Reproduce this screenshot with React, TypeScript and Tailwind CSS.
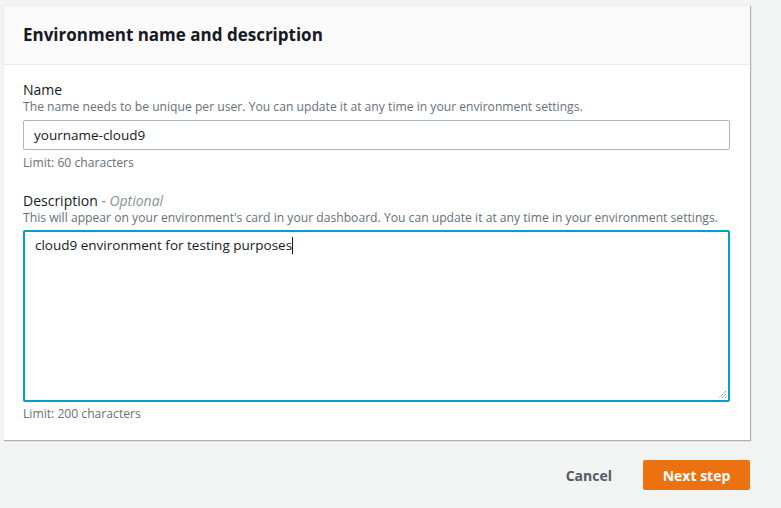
import React from "react";

export default function App() {
  return (
    <div
      className="min-h-[508px] w-full bg-[#f2f3f3] pt-[5px] pl-[3px] pr-[31px]"
      style={{ fontFamily: '"Open Sans", "Noto Sans", sans-serif' }}
    >
      <div className="w-[747px] bg-white border-l border-t border-[#eaeded] shadow-[1px_1px_1px_0_rgba(0,28,36,0.3)]">
        <div className="h-[59px] bg-[#fafafa] border-b border-[#eaeded] flex items-center px-[19px]">
          <h2 className="text-[17px] font-bold text-[#16191f] leading-[22px]">
            Environment name and description
          </h2>
        </div>
        <div className="px-[19px] pt-[16px] pb-[18px]">
          <div className="text-[14px] leading-[18px] text-[#16191f]">Name</div>
          <div className="text-[12.15px] leading-[16px] text-[#687078]">
            The name needs to be unique per user. You can update it at any time in your environment settings.
          </div>
          <div className="mt-[5px] w-[707px] h-[30px] border border-[#aab7b8] rounded-[2px] pl-[10px] flex items-center text-[13.5px] text-[#16191f] bg-white">
            yourname-cloud9
          </div>
          <div className="mt-[5px] text-[12.15px] leading-[16px] text-[#687078]">Limit: 60 characters</div>

          <div className="mt-[21px] text-[14px] leading-[18px] text-[#16191f]">
            Description <span className="italic text-[#879596]">- Optional</span>
          </div>
          <div className="text-[12.15px] leading-[16px] text-[#687078]">
            This will appear on your environment's card in your dashboard. You can update it at any time in your environment settings.
          </div>
          <div className="relative mt-[4px] w-[707px] h-[172px] border-2 border-[#00a1c9] rounded-[2px] pl-[10px] pt-[3px] bg-white">
            <div className="text-[13.5px] leading-[20px] text-[#16191f] flex items-center">
              <span>cloud9 environment for testing purposes</span>
              <span className="inline-block w-px h-[17px] bg-[#16191f]" />
            </div>
            <svg
              className="absolute right-[1px] bottom-[1px]"
              width="9"
              height="9"
              viewBox="0 0 9 9"
            >
              <path d="M8 1 L1 8 M8 4 L4 8 M8 7 L7 8" stroke="#545b64" strokeWidth="1" strokeDasharray="1 1" />
            </svg>
          </div>
          <div className="mt-[4px] text-[12.15px] leading-[16px] text-[#687078]">Limit: 200 characters</div>
        </div>
      </div>
      <div className="w-[747px] flex justify-end items-center mt-[20px]">
        <button className="text-[14px] font-bold text-[#545b64] px-[20px] h-[30px] mr-[11px]">Cancel</button>
        <button className="w-[107px] h-[30px] bg-[#ec7211] rounded-[2px] text-[14px] font-bold text-white">
          Next step
        </button>
      </div>
    </div>
  );
}
